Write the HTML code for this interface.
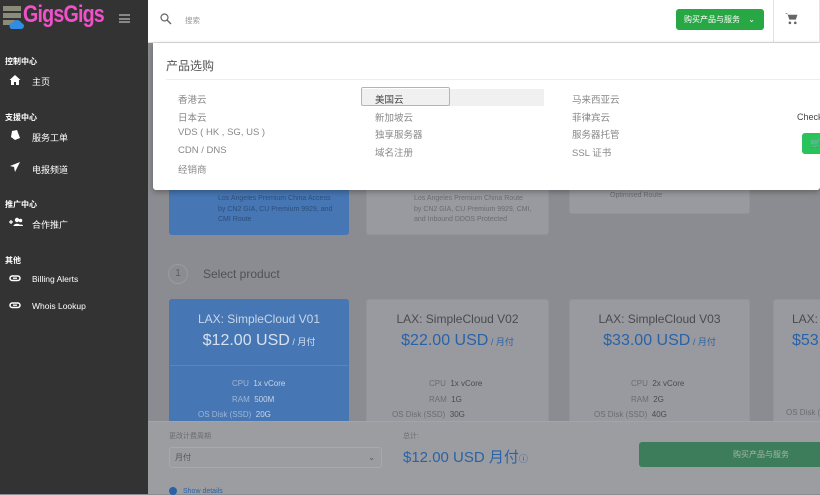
<!DOCTYPE html>
<html><head><meta charset="utf-8"><style>
*{margin:0;padding:0;box-sizing:border-box}
body{width:820px;height:494px;overflow:hidden;font-family:"Liberation Sans","Noto Sans CJK SC",sans-serif;background:#8b8c91;position:relative}
.sb{position:absolute;left:0;top:0;width:148px;height:494px;background:#333}
.sb .sec{position:absolute;left:5px;font-size:8px;color:#fff;font-weight:bold}
.sb .it{position:absolute;left:32px;font-size:9px;color:#fff}
.sb .ic{position:absolute;left:9px;width:12px;height:12px}
.hd{position:absolute;left:148px;top:0;width:672px;height:43px;background:#fff;border-bottom:1px solid #ddd}
.main{position:absolute;left:148px;top:43px;width:672px;height:451px;background:#8b8c91}
.card{position:absolute;background:#999a9f;border:1px solid #93949a;border-radius:3px}
.blue{background:#4676b3;border-color:#4676b3}
.t{position:absolute;text-align:center;width:100%}
.dd{position:absolute;left:153px;top:43px;width:667px;height:147px;background:#fff;border-radius:0 0 3px 3px;box-shadow:0 2px 6px rgba(0,0,0,.3)}
.dd a{position:absolute;font-size:9.5px;color:#888;text-decoration:none}
</style></head><body>
<div class="sb">
 <svg style="position:absolute;left:2px;top:5px" width="22" height="24" viewBox="0 0 22 24"><rect x="1" y="1" width="18" height="5" fill="#8b8b7a"/><rect x="1" y="8" width="18" height="5" fill="#8b8b7a"/><rect x="1" y="15" width="12" height="5" fill="#8b8b7a"/><circle cx="15" cy="20" r="5" fill="#2f8de4"/><circle cx="11" cy="21" r="3.5" fill="#2f8de4"/><circle cx="19" cy="21" r="3" fill="#2f8de4"/></svg>
 <div style="position:absolute;left:23px;top:1px;font-size:24px;font-weight:bold;color:#f050c8;letter-spacing:-1px;transform:scaleX(0.82);transform-origin:left top">GigsGigs</div>
 <div style="position:absolute;left:119px;top:14px;width:11px;height:9px;border-top:2px solid #888;border-bottom:2px solid #888"><div style="margin-top:1.5px;height:2px;background:#888"></div></div>
 <div class="sec" style="top:56px">控制中心</div>
 <svg class="ic" style="top:74px" viewBox="0 0 12 12"><path d="M6 1L0.5 6H2v5h3V8h2v3h3V6h1.5z" fill="#fff"/></svg><div class="it" style="top:75px">主页</div>
 <div class="sec" style="top:112px">支援中心</div>
 <svg class="ic" style="top:129px" viewBox="0 0 12 12"><path d="M3 2l5-1 3 8-5 2-4-3z" fill="#fff"/></svg><div class="it" style="top:131px">服务工单</div>
 <svg class="ic" style="top:161px" viewBox="0 0 12 12"><path d="M11 1L1 5l4 1 1 5z" fill="#fff"/></svg><div class="it" style="top:163px">电报频道</div>
 <div class="sec" style="top:199px">推广中心</div>
 <svg class="ic" style="top:216px;width:14px" viewBox="0 0 14 12"><circle cx="8" cy="4" r="2.2" fill="#fff"/><circle cx="11.5" cy="4.5" r="1.8" fill="#fff"/><path d="M4.5 10c0-3 7-3 7 0zM10 10c0-2 4-2 4 0z" fill="#fff"/><path d="M0 6h4M2 4v4" stroke="#fff" stroke-width="1.3"/></svg><div class="it" style="top:218px">合作推广</div>
 <div class="sec" style="top:255px">其他</div>
 <svg class="ic" style="top:272px" viewBox="0 0 12 12"><rect x="1" y="4" width="10" height="4.5" rx="2.2" fill="none" stroke="#fff" stroke-width="1.5"/><path d="M4 6.2h4" stroke="#fff" stroke-width="1.3"/></svg><div class="it" style="top:274px;font-size:8.5px">Billing Alerts</div>
 <svg class="ic" style="top:299px" viewBox="0 0 12 12"><rect x="1" y="4" width="10" height="4.5" rx="2.2" fill="none" stroke="#fff" stroke-width="1.5"/><path d="M4 6.2h4" stroke="#fff" stroke-width="1.3"/></svg><div class="it" style="top:301px;font-size:8.5px">Whois Lookup</div>
</div>
<div class="hd">
 <svg style="position:absolute;left:12px;top:13px" width="12" height="12" viewBox="0 0 12 12"><circle cx="4.5" cy="4.5" r="3.5" fill="none" stroke="#666" stroke-width="1.2"/><path d="M7 7l4 4" stroke="#666" stroke-width="1.4"/></svg>
 <div style="position:absolute;left:37px;top:15px;font-size:7.5px;color:#999">搜索</div>
 <div style="position:absolute;left:528px;top:9px;width:88px;height:21px;background:#28a745;border-radius:3px;color:#fff;font-size:8px;line-height:21px;padding-left:8px">购买产品与服务 <span style="margin-left:6px">⌄</span></div>
 <div style="position:absolute;left:625px;top:0;width:1px;height:43px;background:#e3e3e3"></div>
 <svg style="position:absolute;left:637px;top:12px" width="13" height="13" viewBox="0 0 12 12"><path d="M0 1h2l2 6h6l1.5-4.5H3" fill="#666"/><circle cx="4.5" cy="10" r="1.2" fill="#666"/><circle cx="9.5" cy="10" r="1.2" fill="#666"/></svg>
 <div style="position:absolute;left:671px;top:0;width:1px;height:43px;background:#e3e3e3"></div>
</div>
<div class="main">
 <div class="card blue" style="left:21px;top:110px;width:180px;height:82px"><div style="position:absolute;left:48px;top:40px;font-size:7px;color:#2d4e7a;line-height:10.5px">Los Angeles Premium China Access<br>by CN2 GIA, CU Premium 9929, and<br>CMI Route</div></div>
 <div class="card" style="left:218px;top:110px;width:183px;height:82px"><div style="position:absolute;left:47px;top:40px;font-size:7px;color:#6b6c70;line-height:10.5px">Los Angeles Premium China Route<br>by CN2 GIA, CU Premium 9929, CMI,<br>and Inbound DDOS Protected</div></div>
 <div class="card" style="left:421px;top:110px;width:181px;height:61px"><div style="position:absolute;left:40px;top:38px;font-size:7px;color:#6b6c70">Optimised Route</div></div>
 <div style="position:absolute;left:20px;top:221px;width:20px;height:20px;border:1px solid #9a9b9f;border-radius:50%;font-size:10px;color:#5c5d61;text-align:center;line-height:18px">1</div>
 <div style="position:absolute;left:55px;top:224px;font-size:12px;color:#505155">Select product</div>
 <div class="card blue" style="left:21px;top:256px;width:180px;height:140px">
  <div class="t" style="top:12px;font-size:12px;color:#c9d6e8">LAX: SimpleCloud V01</div>
  <div class="t" style="top:32px;font-size:16px;color:#d7e1ee">$12.00 USD<span style="font-size:9px"> / 月付</span></div>
  <div style="position:absolute;left:0;right:0;top:65px;border-top:1px solid #5a86bd"></div>
  <div style="position:absolute;left:0;width:100%;top:76px;font-size:8px;color:#9fb6d6;line-height:15.5px"><div style="margin-left:62px">CPU &nbsp;<span style="color:#c9d6e8">1x vCore</span></div><div style="margin-left:62px">RAM &nbsp;<span style="color:#c9d6e8">500M</span></div><div style="margin-left:28px">OS Disk (SSD) &nbsp;<span style="color:#c9d6e8">20G</span></div></div>
 </div>
 <div class="card" style="left:218px;top:256px;width:183px;height:140px">
  <div class="t" style="top:12px;font-size:12px;color:#4a4b4f">LAX: SimpleCloud V02</div>
  <div class="t" style="top:32px;font-size:16px;color:#2a62a8">$22.00 USD<span style="font-size:9px"> / 月付</span></div>
  <div style="position:absolute;left:0;width:100%;top:76px;font-size:8px;color:#6b6c70;line-height:15.5px"><div style="margin-left:62px">CPU &nbsp;<span style="color:#4a4b4f">1x vCore</span></div><div style="margin-left:62px">RAM &nbsp;<span style="color:#4a4b4f">1G</span></div><div style="margin-left:25px">OS Disk (SSD) &nbsp;<span style="color:#4a4b4f">30G</span></div></div>
 </div>
 <div class="card" style="left:421px;top:256px;width:181px;height:140px">
  <div class="t" style="top:12px;font-size:12px;color:#4a4b4f">LAX: SimpleCloud V03</div>
  <div class="t" style="top:32px;font-size:16px;color:#2a62a8">$33.00 USD<span style="font-size:9px"> / 月付</span></div>
  <div style="position:absolute;left:0;width:100%;top:76px;font-size:8px;color:#6b6c70;line-height:15.5px"><div style="margin-left:61px">CPU &nbsp;<span style="color:#4a4b4f">2x vCore</span></div><div style="margin-left:61px">RAM &nbsp;<span style="color:#4a4b4f">2G</span></div><div style="margin-left:24px">OS Disk (SSD) &nbsp;<span style="color:#4a4b4f">40G</span></div></div>
 </div>
 <div class="card" style="left:625px;top:256px;width:60px;height:140px">
  <div style="position:absolute;left:18px;top:12px;font-size:12px;color:#4a4b4f">LAX:</div>
  <div style="position:absolute;left:18px;top:32px;font-size:16px;color:#2a62a8">$53</div>
  <div style="position:absolute;left:12px;top:108px;font-size:8px;color:#6b6c70">OS Disk (S</div>
 </div>
 <div style="position:absolute;left:0;top:378px;width:672px;height:73px;background:#9c9da1;border-top:1px solid #a3a4a8">
  <div style="position:absolute;left:21px;top:9px;font-size:7px;color:#6b6c70">更改计费周期</div>
  <div style="position:absolute;left:21px;top:25px;width:213px;height:21px;border:1px solid #a8a9ad;border-radius:3px;font-size:8px;color:#555;line-height:19px;padding-left:5px">月付<span style="position:absolute;right:6px;font-size:8px">⌄</span></div>
  <div style="position:absolute;left:255px;top:9px;font-size:7px;color:#6b6c70">总计:</div>
  <div style="position:absolute;left:255px;top:24px;font-size:15px;color:#2a62a8">$12.00 USD 月付<span style="font-size:9px">ⓘ</span></div>
  <div style="position:absolute;left:491px;top:20px;width:185px;height:25px;background:#3e7d5c;border-radius:3px;color:#9fb8aa;font-size:8px;line-height:25px;padding-left:94px">购买产品与服务</div>
  <div style="position:absolute;left:21px;top:65px;width:8px;height:8px;border-radius:50%;background:#2a62a8"></div>
  <div style="position:absolute;left:35px;top:66px;font-size:7px;color:#2a62a8">Show details</div>
 </div>
</div>
<div class="dd">
 <div style="position:absolute;left:13px;top:14px;font-size:12px;color:#555">产品选购</div>
 <div style="position:absolute;left:13px;top:36px;right:0;border-top:1px solid #eee"></div>
 <div style="position:absolute;left:208px;top:46px;width:183px;height:17px;background:#f0f0f0"></div>
 <div style="position:absolute;left:208px;top:44px;width:89px;height:19px;border:1px solid #f29a9a;border-radius:2px"></div>
 <a style="left:25px;top:49px">香港云</a><a style="left:25px;top:67px">日本云</a><a style="left:25px;top:84px">VDS ( HK , SG, US )</a><a style="left:25px;top:102px">CDN / DNS</a><a style="left:25px;top:119px">经销商</a>
 <a style="left:222px;top:49px;color:#444">美国云</a><a style="left:222px;top:67px">新加坡云</a><a style="left:222px;top:84px">独享服务器</a><a style="left:222px;top:102px">域名注册</a>
 <a style="left:419px;top:49px">马来西亚云</a><a style="left:419px;top:67px">菲律宾云</a><a style="left:419px;top:84px">服务器托管</a><a style="left:419px;top:102px">SSL 证书</a>
 <div style="position:absolute;left:644px;top:69px;font-size:9px;color:#444">Check</div>
 <div style="position:absolute;left:649px;top:90px;width:20px;height:21px;background:#28c35a;border-radius:3px 0 0 3px;color:#fff;font-size:9px;line-height:21px;padding-left:8px">🛒</div>
</div>
</body></html>
